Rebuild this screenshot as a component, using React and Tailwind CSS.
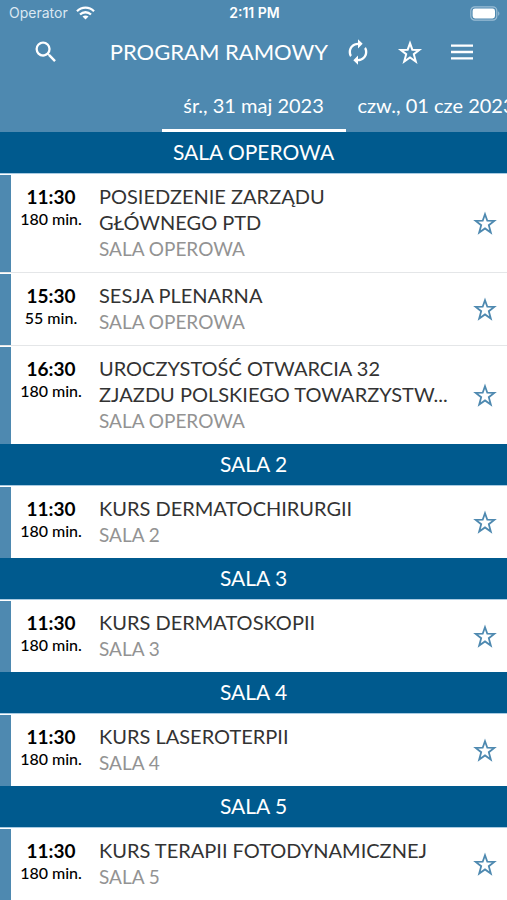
import React from "react";
import { MdSearch, MdAutorenew } from "react-icons/md";

const sections = [
  {
    name: "SALA OPEROWA",
    sessions: [
      { time: "11:30", length: "180 min.", title: "POSIEDZENIE ZARZĄDU\nGŁÓWNEGO PTD" },
      { time: "15:30", length: "55 min.", title: "SESJA PLENARNA" },
      { time: "16:30", length: "180 min.", title: "UROCZYSTOŚĆ OTWARCIA 32\nZJAZDU POLSKIEGO TOWARZYSTW..." },
    ],
  },
  { name: "SALA 2", sessions: [{ time: "11:30", length: "180 min.", title: "KURS DERMATOCHIRURGII" }] },
  { name: "SALA 3", sessions: [{ time: "11:30", length: "180 min.", title: "KURS DERMATOSKOPII" }] },
  { name: "SALA 4", sessions: [{ time: "11:30", length: "180 min.", title: "KURS LASEROTERPII" }] },
  { name: "SALA 5", sessions: [{ time: "11:30", length: "180 min.", title: "KURS TERAPII FOTODYNAMICZNEJ" }] },
];

function StarIcon({ className }) {
  return (
    <svg className={className} viewBox="0 0 28 28" fill="none" stroke="currentColor" aria-hidden="true">
      <path d="M14 5.2 16.3 11.7 23.3 11.9 17.8 16.2 19.8 23.6 14 19.4 8.2 23.6 10.2 16.2 4.7 11.9 11.7 11.7z" />
    </svg>
  );
}

function MenuIcon({ className }) {
  return (
    <svg className={className} viewBox="0 0 28 28" fill="none" stroke="currentColor" strokeWidth="2.4" aria-hidden="true">
      <path d="M3 7.6h22M3 14h22M3 20.4h22" />
    </svg>
  );
}

function StatusBar() {
  return (
    <div className="grid h-[26px] grid-cols-3 items-center pl-[9px] pr-[7px] font-['Inter',sans-serif] text-[14px] leading-[26px]">
      <div className="flex items-center gap-2 text-[#dbe8f2]">
        <span>Operator</span>
        <svg className="h-[14px] w-[19px]" viewBox="0 0 19 14" fill="none" stroke="white" strokeWidth="2.3">
          <path d="M1 5.2C5.8.5 13.2.5 18 5.2" />
          <path d="M4 8.5c3.2-3 7.8-3 11 0" />
          <path d="M9.5 13.6 6.5 10.6c1.7-1.5 4.3-1.5 6 0z" fill="white" stroke="none" />
        </svg>
      </div>
      <span className="text-center font-semibold">2:11 PM</span>
      <svg className="h-[15px] w-[30px] justify-self-end" viewBox="0 0 30 15">
        <rect x=".8" y=".8" width="26" height="13.4" rx="4" fill="none" stroke="#9bbdd5" strokeWidth="1.2" />
        <rect x="2.6" y="2.6" width="22.4" height="9.8" rx="2.4" fill="white" />
        <path d="M28.2 5.2c1.6.8 1.6 3.8 0 4.6z" fill="#9bbdd5" />
      </svg>
    </div>
  );
}

function Session({ session, room }) {
  return (
    <li className="flex border-t border-[#e4e6e8] bg-white first:border-t-0">
      <div className="mt-px w-[11px] shrink-0 bg-[#4e89b0]" />
      <div className="w-20 shrink-0 pt-3 text-center leading-[22px] text-black">
        <div className="text-[19px] font-bold">{session.time}</div>
        <div className="text-[16px] font-medium">{session.length}</div>
      </div>
      <div className="min-w-0 flex-1 pb-[9px] pl-2 pt-[9px]">
        <h3 className="whitespace-pre text-[20px] leading-[26px] text-[#333333]">{session.title}</h3>
        <p className="text-[19px] leading-[28px] text-[#939393]">{room}</p>
      </div>
      <button type="button" aria-label="Dodaj do ulubionych" className="mr-2 shrink-0 text-[#4e89b0]">
        <StarIcon className="size-7 stroke-[1.8]" />
      </button>
    </li>
  );
}

export default function App() {
  return (
    <div className="min-h-screen overflow-hidden bg-white font-['Lato',sans-serif]">
      <header className="bg-[#4e89b0] text-white">
        <StatusBar />
        <div className="flex h-[52px] items-center pl-8 pr-[31px]">
          <button type="button" aria-label="Szukaj">
            <MdSearch className="size-7" />
          </button>
          <h1 className="flex-1 whitespace-nowrap pr-4 text-right text-[22px] leading-[26px]">PROGRAM RAMOWY</h1>
          <div className="flex items-center gap-6">
            <button type="button" aria-label="Odśwież">
              <MdAutorenew className="size-7" />
            </button>
            <button type="button" aria-label="Ulubione">
              <StarIcon className="size-7 stroke-2" />
            </button>
            <button type="button" aria-label="Menu">
              <MenuIcon className="size-7" />
            </button>
          </div>
        </div>
        <nav className="grid h-[54px] grid-cols-[1fr_184px_1fr] text-[20px] leading-[26px]">
          <button type="button" className="col-start-2 whitespace-nowrap border-b-[3px] border-white pt-[2px]">
            śr., 31 maj 2023
          </button>
          <button type="button" className="overflow-hidden whitespace-nowrap border-b-[3px] border-transparent pl-3 pt-[2px] text-left">
            czw., 01 cze 2023
          </button>
        </nav>
      </header>
      <main>
        {sections.map((section) => (
          <section key={section.name}>
            <h2 className="h-[42px] border-b border-[#a9cbe2] bg-[#005a8e] text-center text-[21px] leading-[40px] text-white">
              {section.name}
            </h2>
            <ul>
              {section.sessions.map((session) => (
                <Session key={session.time} session={session} room={section.name} />
              ))}
            </ul>
          </section>
        ))}
      </main>
    </div>
  );
}
